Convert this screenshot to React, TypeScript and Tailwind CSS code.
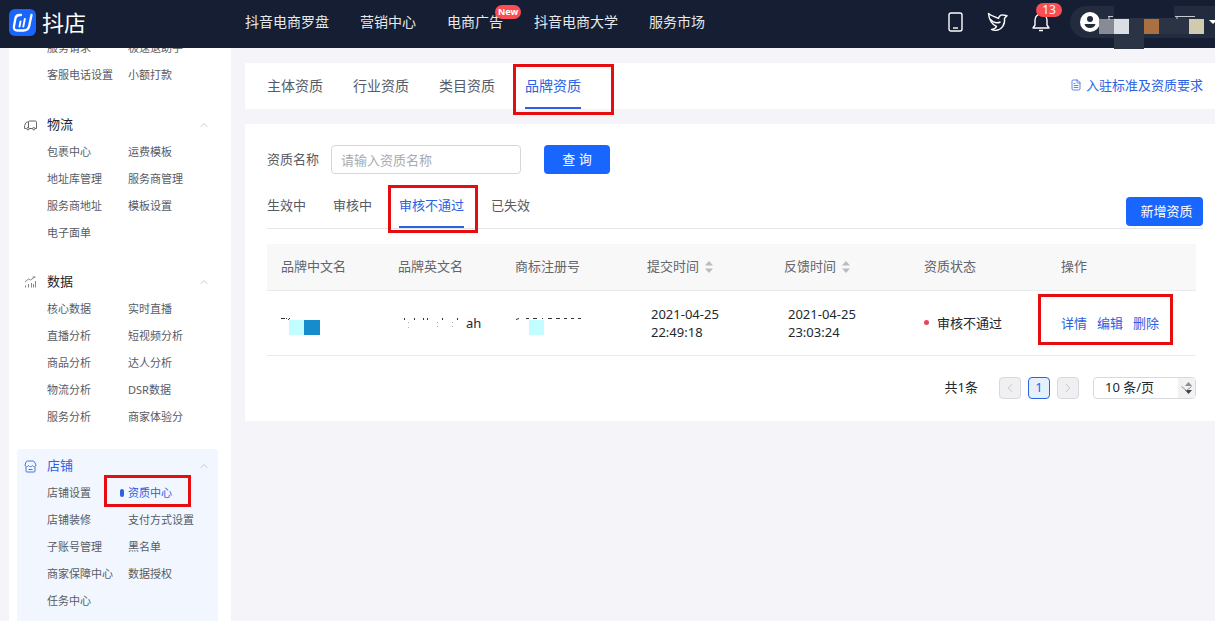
import { type ReactNode } from 'react'
import { ChevronLeft, ChevronRight, ChevronUp, FileText } from 'lucide-react'

const NAV = [
  { label: '抖音电商罗盘' },
  { label: '营销中心' },
  { label: '电商广告', badge: 'New' },
  { label: '抖音电商大学' },
  { label: '服务市场' },
]

const MENU = [
  {
    title: '物流',
    icon: <TruckIcon />,
    items: ['包裹中心', '运费模板', '地址库管理', '服务商管理', '服务商地址', '模板设置', '电子面单'],
  },
  {
    title: '数据',
    icon: <ChartIcon />,
    items: ['核心数据', '实时直播', '直播分析', '短视频分析', '商品分析', '达人分析', '物流分析', 'DSR数据', '服务分析', '商家体验分'],
  },
  {
    title: '店铺',
    icon: <ShopIcon />,
    active: '资质中心',
    items: ['店铺设置', '资质中心', '店铺装修', '支付方式设置', '子账号管理', '黑名单', '商家保障中心', '数据授权', '任务中心'],
  },
]

const TABS = ['主体资质', '行业资质', '类目资质', '品牌资质']
const STATES = ['生效中', '审核中', '审核不通过', '已失效']

function Marker({ className }: { className: string }) {
  return <span aria-hidden className={`absolute border-[3px] border-[#e60d10] pointer-events-none z-10 ${className}`} />
}

function Logo() {
  return (
    <svg width="27" height="27" viewBox="0 0 27 27" fill="none" stroke="#fff" strokeLinecap="round" strokeLinejoin="round">
      <rect width="27" height="27" rx="6" fill="#1966ff" stroke="none" />
      <path d="M12 6H10.500C8 6 6.800 7.300 6.400 9.500L5 17c-.6 3.400.8 4.500 3.500 4.500h6c3.400 0 5-1.300 5.700-4.500L22.500 6" strokeWidth="2.300" />
      <path d="M11.500 12.500l-1 5M15.800 10l-1.500 7.500" strokeWidth="1.900" />
    </svg>
  )
}

function TruckIcon() {
  return (
    <svg width="13" height="11" viewBox="0 0 13 11" fill="none" stroke="#62656c">
      <path d="M4.500 8.500V2q0-1 1-1h5.700q1.300 0 1.300 1.300V8.500H4.500M4.500 2H3.200Q2.300 2 1.800 3L.6 5.500v3h1.600" />
      <circle cx="4" cy="8.700" r="1.200" fill="#fff" />
      <circle cx="9.800" cy="8.700" r="1.200" fill="#fff" />
    </svg>
  )
}

function ChartIcon() {
  return (
    <svg width="13" height="12" viewBox="0 0 13 12" fill="none" stroke="#83868c">
      <path d="M1 6l3.500-3 2 1L11 1M8.500 1h3" />
      <path d="M1.500 9.500v2M4.500 8v3.500M7.500 7v4.500M9.500 8v3.500M11.500 5v6.500" />
    </svg>
  )
}

function ShopIcon() {
  return (
    <svg width="13" height="13" viewBox="0 0 13 13" fill="none" stroke="#4574e6">
      <path d="M3.500 1h5.500q1 0 1.500 1L12 5c0 2-2.800 2.300-3.500.5C8 7 5 7 4.500 5.500 3.800 7.300 1 7 1 5L2 2q.5-1 1.500-1zM2 7v4q0 1 1 1h7q1 0 1-1V7M4.500 9.500h4" strokeLinejoin="round" />
    </svg>
  )
}

function PhoneIcon() {
  return (
    <svg width="15" height="20" viewBox="0 0 15 20" fill="none" stroke="#fff" strokeWidth="1.400">
      <rect x="1" y="1" width="13" height="18" rx="2" />
      <path d="M5 16h5" />
    </svg>
  )
}

function BirdIcon() {
  return (
    <svg width="21" height="20" viewBox="0 0 21 20" fill="none" stroke="#fff" strokeWidth="1.400" strokeLinejoin="round">
      <path d="M1.500 1.500c2.500 2.500 6.500 3 10 5C12 4 14 2.500 16 3l4 .8-2.500 2.400c.8 6-2.500 12-9 12.200-1.500 0-3-.3-4-1 2.500-.2 4.300-1.200 5-2.900C5.500 13 2 8 1.500 1.500z" />
      <path d="M3 7c3 3.500 7 4.500 10.500 3" />
    </svg>
  )
}

function BellIcon() {
  return (
    <svg width="18" height="20" viewBox="0 0 18 20" fill="none" stroke="#fff" strokeWidth="1.400" strokeLinejoin="round">
      <path d="M1 16h16l-2-3V8c0-3.500-2.500-6-6-6S3 4.500 3 8v5zM7 18.500h4" />
    </svg>
  )
}

function Avatar() {
  return (
    <svg width="20" height="20" viewBox="0 0 20 20">
      <circle cx="10" cy="10" r="10" fill="#fff" />
      <circle cx="10" cy="7" r="3" fill="#222c3e" />
      <path d="M4.500 12h11c-.5 2.500-2.700 4-5.500 4s-5-1.500-5.500-4z" fill="#222c3e" />
    </svg>
  )
}

function Sorter() {
  return (
    <svg width="8" height="12" viewBox="0 0 8 12" fill="#b9bbc0">
      <path d="M4 0l4 4.500H0zM4 12l4-4.500H0z" />
    </svg>
  )
}

function Mosaic() {
  return (
    <svg className="absolute left-0 top-0" width="145" height="43" viewBox="0 0 145 43">
      <path d="M44 0h60v12H44z" fill="#151e32" />
      <path d="M44 12h85v16H44zM44 28h30v15H44z" fill="#2b3444" />
      <path d="M29 13h15v15H29z" fill="#888b95" />
      <path d="M44 13h15v15H44z" fill="#dcdee5" />
      <path d="M74 13h15v15H74z" fill="#ab7042" />
      <path d="M119 13h15v15h-15z" fill="#d0cbae" />
      <path d="M139 14h8l-4 4z" fill="#fff" />
      <path d="M38 10.500h5M39 10v4M105 10.500h20M107 10v3" stroke="#c7cad1" />
    </svg>
  )
}

function Header() {
  return (
    <header className="relative z-20 flex h-12 shrink-0 items-center bg-[#151e32] text-sm text-[#e6e8ec]">
      <a href="#home" className="flex w-[245px] shrink-0 items-center gap-1.5 pb-0.5 pl-[9px] text-[22px] text-white">
        <Logo />
        抖店
      </a>
      <nav className="flex flex-1 gap-[31px] whitespace-nowrap pb-1">
        {NAV.map((n) => (
          <a key={n.label} href="#nav" className="relative">
            {n.label}
            {n.badge && (
              <span className="absolute -top-[7px] left-12 rounded-full bg-[#fa4e54] px-[3px] text-[9px] font-bold leading-[14px] text-white">
                {n.badge}
              </span>
            )}
          </a>
        ))}
      </nav>
      <div className="flex shrink-0 items-center gap-6 pb-1">
        <button aria-label="手机端"><PhoneIcon /></button>
        <button aria-label="飞鸽"><BirdIcon /></button>
        <button aria-label="消息" className="relative">
          <BellIcon />
          <span className="absolute -top-[9px] left-1 w-[26px] rounded-full bg-[#fa4e54] text-center text-xs leading-[14px] text-white">13</span>
        </button>
        <button aria-label="账号" className="relative -ml-1 flex h-8 w-[145px] items-center rounded-l-full bg-[#222c3e] pl-2.5">
          <Avatar />
          <Mosaic />
        </button>
      </div>
    </header>
  )
}

function Sidebar() {
  return (
    <aside className="ml-[9px] w-[222px] shrink-0 bg-white px-2 text-[11px] text-[#585b63]">
      <div className="-mt-3.5 grid grid-cols-[81px_1fr] pl-[30px] leading-[27px]">
        {['服务请求', '极速退助手', '客服电话设置', '小额打款'].map((t) => (
          <a key={t} href="#menu">{t}</a>
        ))}
      </div>
      <div className="mt-5">
        {MENU.map((g) => (
          <section key={g.title} className={`mr-[5px] pt-1 pb-[18px] ${g.active ? 'rounded bg-[#f2f7ff]' : ''}`}>
            <button className={`flex h-[26px] w-full items-center text-[13px] ${g.active ? 'text-[#2b61e2]' : 'text-[#22252b]'}`}>
              <span className="w-[30px] pl-[7px]">{g.icon}</span>
              {g.title}
              <ChevronUp size={12} strokeWidth={1.500} className="ml-auto mr-2 text-[#b5b7bb]" />
            </button>
            <div className="grid grid-cols-[81px_1fr] pb-px pl-[30px] leading-[27px]">
              {g.items.map((t) => (
                <a key={t} href="#menu" className={`relative whitespace-nowrap ${t === g.active ? 'text-[#2b61e2]' : ''}`}>
                  {t === g.active && (
                    <>
                      <span className="absolute -left-2 top-[10px] h-2 w-1 rounded-sm bg-[#2b61e2]" />
                      <Marker className="-left-6 -top-1 h-8 w-[87px]" />
                    </>
                  )}
                  {t}
                </a>
              ))}
            </div>
          </section>
        ))}
      </div>
    </aside>
  )
}

function Th({ children, className = '' }: { children: ReactNode; className?: string }) {
  return <th className={`h-[46px] pl-3.5 text-left font-normal ${className}`}>{children}</th>
}

function BrandTable() {
  return (
    <table className="w-full table-fixed text-[13px] text-[#24272d]">
      <thead className="border-b border-[#ebebed] bg-[#f8f8f9] text-[#62656c]">
        <tr>
          <Th className="w-[117px]">品牌中文名</Th>
          <Th className="w-[117px]">品牌英文名</Th>
          <Th className="w-[132px]">商标注册号</Th>
          <Th className="w-[137px]"><span className="flex items-center gap-1.5">提交时间 <Sorter /></span></Th>
          <Th className="w-[140px]"><span className="flex items-center gap-1.5">反馈时间 <Sorter /></span></Th>
          <Th className="w-[137px]">资质状态</Th>
          <Th>操作</Th>
        </tr>
      </thead>
      <tbody>
        <tr className="h-[65px] border-b border-[#ebebed] leading-[18px]">
          <td className="pl-3.5 pt-1">
            <svg width="60" height="22" viewBox="0 0 60 22">
              <path d="M8 6h15v15H8z" fill="#c2feff" />
              <path d="M23 6h16v15H23z" fill="#168ccd" />
              <path d="M0 4.500h4M5 4.500h1M7 6l2-2" stroke="#33363c" />
            </svg>
          </td>
          <td className="pl-3.5">
            <span className="flex items-center">
              <svg width="68" height="18" viewBox="0 0 68 18" fill="#33363c">
                <path d="M6 4h1v2H6zM16 4h1v2h-1zM25 4h1v2h-1zM29 4h1v2h-1zM44 4h1v2h-1zM59 4h1v2h-1z" />
                <path d="M10 8h1v1h-1zM10 13h1v1h-1zM39 8h1v1h-1zM39 12h1v1h-1zM54 8h1v1h-1zM54 12h1v1h-1z" opacity=".4" />
              </svg>
              ah
            </span>
          </td>
          <td className="pl-3.5 pt-1">
            <svg width="70" height="22" viewBox="0 0 70 22">
              <path d="M14 6h15v15H14z" fill="#c2feff" />
              <path d="M1 5.500l3-1M11 4.500h3M18 4.500h4M27 4.500h1M33 4.500h4M41 4.500h4M49 4.500h3M56 4.500h3M63 4.500h3" fill="none" stroke="#33363c" />
            </svg>
          </td>
          <td className="pl-[18px] pr-8">2021-04-25 22:49:18</td>
          <td className="pl-[18px] pr-8">2021-04-25 23:03:24</td>
          <td className="pl-3.5">
            <span className="flex items-center gap-2">
              <i className="size-[5px] rounded-full bg-[#ea4358]" />
              审核不通过
            </span>
          </td>
          <td className="relative pl-3.5">
            <span className="flex gap-2.5 text-[#2b61e2]">
              {['详情', '编辑', '删除'].map((t) => (
                <a key={t} href="#action">{t}</a>
              ))}
            </span>
            <Marker className="-left-[9px] top-[3px] h-[51px] w-[135px]" />
          </td>
        </tr>
      </tbody>
    </table>
  )
}

function Pagination() {
  return (
    <div className="mt-[21px] flex items-center justify-end text-[13px] text-[#24272d]">
      <span className="mr-[21px]">共1条</span>
      <button aria-label="上一页" className="mr-[7px] grid size-[22px] place-items-center rounded-sm border border-[#d8d9dc] bg-[#f0f0f2] text-[#b9bbc0]"><ChevronLeft size={14} strokeWidth={1.500} /></button>
      <button className="mr-[7px] grid size-[22px] place-items-center rounded-sm border border-[#2b61e2] bg-[#e5f0ff] text-[#2b61e2]">1</button>
      <button aria-label="下一页" className="mr-3.5 grid size-[22px] place-items-center rounded-sm border border-[#d8d9dc] bg-[#f0f0f2] text-[#b9bbc0]"><ChevronRight size={14} strokeWidth={1.500} /></button>
      <div className="relative flex">
        <select aria-label="每页条数" className="h-[22px] w-[103px] appearance-none rounded-sm border border-[#d8d9dc] bg-white pl-[11px]">
          <option>10 条/页</option>
        </select>
        <span className="pointer-events-none absolute right-px top-px grid h-5 w-[17px] place-items-center bg-[#f2f2f3]">
          <svg width="12" height="14" viewBox="0 0 12 14" fill="none">
            <path d="M4 5l3.500-4L11 5z" fill="#8a8c90" />
            <path d="M4 9l3.500 4L11 9z" fill="#404247" />
            <path d="M.5 5.500l5 4 5-4" stroke="#8a8c90" />
          </svg>
        </span>
      </div>
    </div>
  )
}

export default function App() {
  return (
    <div className="flex h-screen flex-col overflow-hidden bg-[#f4f4f9] font-['Noto_Sans','Noto_Sans_CJK_SC',sans-serif]">
      <Header />
      <div className="flex min-h-0 flex-1">
        <Sidebar />
        <main className="ml-3.5 min-w-0 flex-1 pt-[15px]">
          <div className="flex h-[46px] items-start justify-between bg-white pl-[22px] pr-3 text-sm text-[#585b63]">
            <div className="flex gap-[30px]">
              {TABS.map((t, i) => (
                <button key={t} className={`relative h-[46px] border-b-2 pt-0.5 ${i === 3 ? 'border-[#2b61e2] text-[#2b61e2]' : 'border-transparent'}`}>
                  {t}
                  {i === 3 && <Marker className="-left-3 top-px h-[51px] w-[101px]" />}
                </button>
              ))}
            </div>
            <a href="#rules" className="flex h-11 items-center gap-1 text-[13px] text-[#2b61e2]">
              <FileText size={12} strokeWidth={1.500} />
              入驻标准及资质要求
            </a>
          </div>

          <div className="mt-[15px] bg-white pb-[22px] pl-[22px] pr-3 pt-[21px] text-[13px] text-[#585b63]">
            <div className="flex items-center">
              <label htmlFor="name" className="mr-3">资质名称</label>
              <input id="name" placeholder="请输入资质名称" className="h-[29px] w-[190px] rounded-sm border border-[#d5d7db] px-[9px] placeholder:text-[#a9abb1]" />
              <button className="ml-[23px] h-[29px] w-[66px] rounded bg-[#1966ff] text-[13px] text-white">查 询</button>
            </div>
            <div className="mt-[11px] flex h-11 items-end justify-between border-b border-[#e6e7ea]">
              <div className="flex h-full gap-[27px]">
                {STATES.map((t, i) => (
                  <button key={t} className={`relative h-[43px] border-b-2 ${i === 2 ? 'border-[#2b61e2] text-[#2b61e2]' : 'border-transparent'}`}>
                    {t}
                    {i === 2 && <Marker className="-left-[11px] top-0 h-12 w-[90px]" />}
                  </button>
                ))}
              </div>
              <button className="mb-0.5 h-[29px] w-[77px] rounded-sm bg-[#1966ff] pl-1 text-white">新增资质</button>
            </div>
            <div className="mr-[7px] mt-[15px]">
              <BrandTable />
              <Pagination />
            </div>
          </div>
        </main>
      </div>
    </div>
  )
}
